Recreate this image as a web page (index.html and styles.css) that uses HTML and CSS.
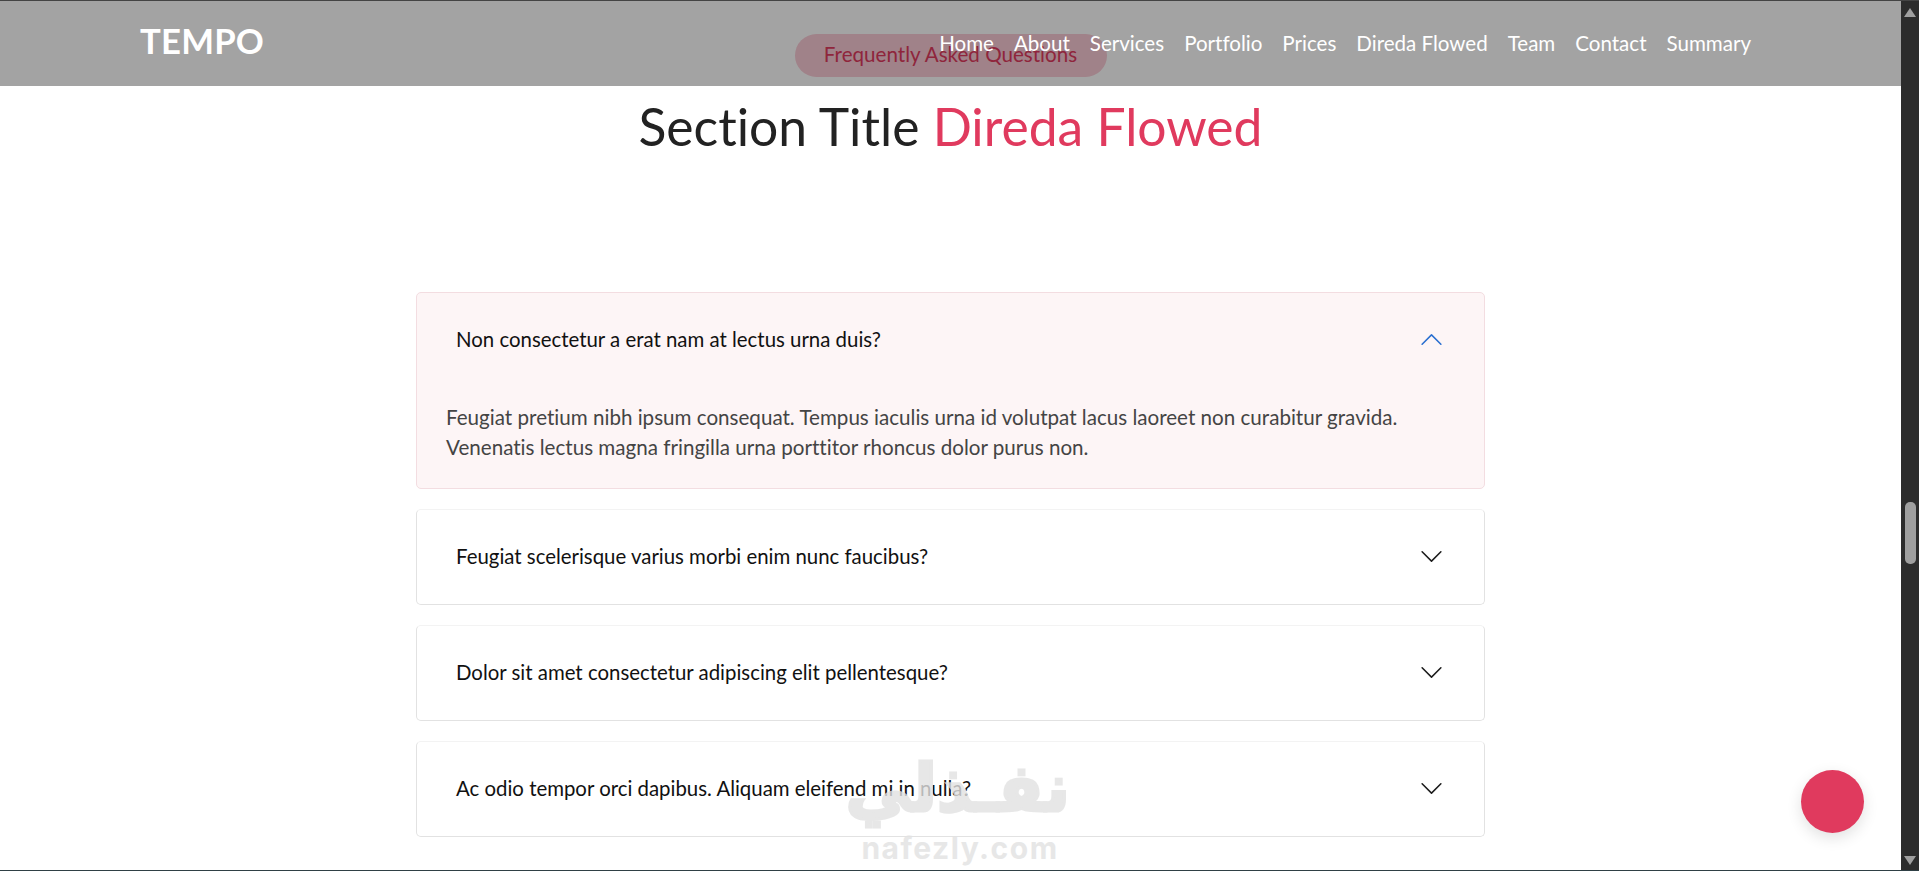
FILE: index.html
```html
<!DOCTYPE html>
<html lang="en">
<head>
<meta charset="utf-8">
<title>Tempo</title>
<link rel="stylesheet" href="styles.css">
</head>
<body>
<div class="window">
  <div class="page">
    <header class="topbar">
      <div class="brand">TEMPO</div>
      <nav class="nav">
        <a>Home</a><a>About</a><a>Services</a><a>Portfolio</a><a>Prices</a><a>Direda Flowed</a><a>Team</a><a>Contact</a><a>Summary</a>
      </nav>
    </header>
    <main class="faq">
      <div class="pill">Frequently Asked Questions</div>
      <h2 class="title">Section Title <span class="accent">Direda Flowed</span></h2>
      <div class="list">
        <section class="card open">
          <div class="question">
            <span>Non consectetur a erat nam at lectus urna duis?</span>
            <svg class="chev up" viewBox="0 0 16 16"><path fill="currentColor" d="M1.646 11.354a.5.5 0 0 0 .708 0L8 5.707l5.646 5.647a.5.5 0 0 0 .708-.708l-6-6a.5.5 0 0 0-.708 0l-6 6a.5.5 0 0 0 0 .708z"/></svg>
          </div>
          <p class="answer">Feugiat pretium nibh ipsum consequat. Tempus iaculis urna id volutpat lacus laoreet non curabitur gravida. Venenatis lectus magna fringilla urna porttitor rhoncus dolor purus non.</p>
        </section>
        <section class="card">
          <div class="question">
            <span>Feugiat scelerisque varius morbi enim nunc faucibus?</span>
            <svg class="chev" viewBox="0 0 16 16"><path fill="currentColor" d="M1.646 4.646a.5.5 0 0 1 .708 0L8 10.293l5.646-5.647a.5.5 0 0 1 .708.708l-6 6a.5.5 0 0 1-.708 0l-6-6a.5.5 0 0 1 0-.708z"/></svg>
          </div>
        </section>
        <section class="card">
          <div class="question">
            <span>Dolor sit amet consectetur adipiscing elit pellentesque?</span>
            <svg class="chev" viewBox="0 0 16 16"><path fill="currentColor" d="M1.646 4.646a.5.5 0 0 1 .708 0L8 10.293l5.646-5.647a.5.5 0 0 1 .708.708l-6 6a.5.5 0 0 1-.708 0l-6-6a.5.5 0 0 1 0-.708z"/></svg>
          </div>
        </section>
        <section class="card">
          <div class="question">
            <span>Ac odio tempor orci dapibus. Aliquam eleifend mi in nulla?</span>
            <svg class="chev" viewBox="0 0 16 16"><path fill="currentColor" d="M1.646 4.646a.5.5 0 0 1 .708 0L8 10.293l5.646-5.647a.5.5 0 0 1 .708.708l-6 6a.5.5 0 0 1-.708 0l-6-6a.5.5 0 0 1 0-.708z"/></svg>
          </div>
        </section>
      </div>
    </main>
    <div class="watermark">
      <div class="wm-ar" lang="ar" dir="rtl">نفـذلي</div>
      <div class="wm-en">nafezly.com</div>
    </div>
    <div class="fab"></div>
  </div>
  <aside class="scrollbar">
    <div class="arrow-up"></div>
    <div class="thumb"></div>
    <div class="arrow-down"></div>
  </aside>
</div>
</body>
</html>
```
FILE: styles.css
```css
* { box-sizing: border-box; }
html, body { margin: 0; height: 100%; overflow: hidden; background: #fff; }
body { font-family: "Lato", "Noto Sans", sans-serif; color: #111; font-variant-ligatures: none; }

.window {
  display: flex;
  height: 871px;
  border-top: 1px solid #444;
  border-bottom: 1px solid #2f4045;
}
.page { position: relative; flex: 1; min-width: 0; overflow: hidden; background: #fff; }

.topbar {
  position: absolute;
  top: 0; left: 0; right: 0;
  height: 85px;
  background: rgba(0, 0, 0, .36);
  display: flex;
  justify-content: space-between;
  padding: 0 150px 0 140px;
  z-index: 2;
}
.brand { color: #fff; font-weight: 700; font-size: 34.7px; line-height: 80px; letter-spacing: .2px; }
.nav { display: flex; gap: 20px; padding-top: 29px; color: #fff; font-size: 20.55px; line-height: 26px; }

.faq { display: flex; flex-direction: column; align-items: center; padding-top: 33px; }
.pill {
  height: 43px;
  width: 312px;
  border-radius: 22px;
  background: #facbd6;
  color: #e03a5e;
  font-size: 20.6px;
  line-height: 41px;
  text-align: center;
}
.title {
  margin: 18px 0 0;
  font-size: 51.6px;
  line-height: 62px;
  font-weight: 400;
  color: #222;
  white-space: nowrap;
}
.accent { color: #e03a5e; }

.list { width: 1069px; margin-top: 135px; display: flex; flex-direction: column; gap: 20px; }
.card {
  background: #fff;
  border: 1px solid #e2e2e2;
  border-top-color: #f3f3f3;
  border-radius: 5px;
  min-height: 96px;
}
.card.open { background: #fdf5f6; border-color: #f3dde1; height: 197px; }
.question {
  height: 94px;
  padding: 0 40px 2px 39px;
  display: flex;
  align-items: center;
  justify-content: space-between;
  font-size: 20.4px;
  color: #111;
}
.chev { width: 25px; height: 25px; color: #1c1c1c; flex: none; }
.chev.up { color: #2a6fd0; }
.answer { margin: 15px 0 0; padding: 0 29px; font-size: 20.6px; line-height: 30px; color: #444; }

.watermark {
  position: absolute;
  left: 850px; top: 748px;
  width: 220px;
  text-align: center;
  color: #e2e2e2;
  opacity: .8;
  z-index: 1;
}
.wm-ar {
  font-family: "DejaVu Sans", sans-serif;
  font-weight: 700;
  font-size: 66px;
  line-height: 80px;
  -webkit-text-stroke: 3px #e2e2e2;
}
.wm-en { font-family: "Inter", sans-serif; font-weight: 700; font-size: 30px; line-height: 30px; letter-spacing: 1.5px; margin-top: 4px; }

.fab {
  position: absolute;
  left: 1801px; top: 769px;
  width: 63px; height: 63px;
  border-radius: 50%;
  background: #e03a5e;
  box-shadow: 0 5px 15px rgba(0, 0, 0, .12);
  z-index: 3;
}

.scrollbar {
  width: 18px;
  flex: none;
  background: #2c2c2c;
  display: flex;
  flex-direction: column;
  align-items: center;
  padding: 7px 0 5px;
}
.arrow-up { width: 0; height: 0; border: 6px solid transparent; border-top: 0; border-bottom: 9px solid #9f9f9f; }
.thumb { width: 11px; height: 62px; border-radius: 5px; background: #9f9f9f; margin-top: 485px; }
.arrow-down { width: 0; height: 0; border: 6px solid transparent; border-bottom: 0; border-top: 9px solid #9f9f9f; margin-top: auto; }
```
